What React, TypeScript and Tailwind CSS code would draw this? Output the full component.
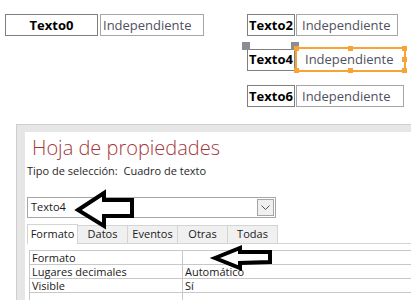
import React from 'react'

const font = { fontFamily: '"Open Sans", "Noto Sans", sans-serif' }

function Label({ text, w = 'w-[48px]' }: { text: string; w?: string }) {
  return (
    <div className={`flex h-[22px] ${w} items-center justify-center border border-[#7f7f7f] bg-white text-[13px] font-bold leading-none text-black`}>
      {text}
    </div>
  )
}

function Field({ w, pad = 'pl-[5px]' }: { w: string; pad?: string }) {
  return (
    <div className={`flex h-[22px] ${w} items-center border border-[#a6a6a6] bg-white text-[13px] leading-none text-[#4f5060] ${pad}`}>
      Independiente
    </div>
  )
}

function Handle({ className }: { className: string }) {
  return <div className={`absolute h-[5px] w-[5px] bg-[#f7a335] ${className}`} />
}

const tabs = ['Formato', 'Datos', 'Eventos', 'Otras', 'Todas']

const rows: { name: string; value: string }[] = [
  { name: 'Formato', value: '' },
  { name: 'Lugares decimales', value: 'Automático' },
  { name: 'Visible', value: 'Sí' },
  { name: '', value: '' },
]

export default function App() {
  return (
    <div className="relative h-[300px] w-[411px] overflow-hidden bg-white" style={font}>
      {/* form design canvas: controls sit where the designer put them */}
      <div className="relative h-[124px]">
        <div className="absolute left-[5px] top-[14px] flex gap-[2px]">
          <Label text="Texto0" w="w-[93px]" />
          <Field w="w-[104px]" pad="pl-[2px]" />
        </div>

        <div className="absolute left-[247px] top-[14px] flex flex-col gap-[11px]">
          <div className="flex gap-[1px]">
            <Label text="Texto2" />
            <Field w="w-[102px]" />
          </div>

          <div className="relative flex items-center">
            <Label text="Texto4" />
            <div className="absolute left-[-5px] top-[-5px] h-[8px] w-[8px] bg-[#8c8c94]" />
            <div className="absolute left-[44px] top-[-5px] h-[8px] w-[8px] bg-[#8c8c94]" />
            <div className="relative flex h-[25px] w-[111px] items-center border-2 border-[#f7a335] bg-white pl-[8px] text-[13px] leading-none text-[#4f5060]">
              Independiente
              <Handle className="left-[-3px] top-[-3px]" />
              <Handle className="left-[51px] top-[-3px]" />
              <Handle className="right-[-3px] top-[-3px]" />
              <Handle className="right-[-3px] top-[8px]" />
              <Handle className="bottom-[-3px] right-[-3px]" />
              <Handle className="bottom-[-3px] left-[51px]" />
              <Handle className="bottom-[-3px] left-[-3px]" />
            </div>
          </div>

          <div className="mt-[2px] flex gap-[1px]">
            <Label text="Texto6" />
            <Field w="w-[108px]" />
          </div>
        </div>
      </div>

      {/* property sheet */}
      <div className="ml-[16px] h-[176px] border-l border-t border-[#cfcfcf] bg-[#e6e6e6] pl-[8px] pt-[7px]">
        <div className="h-full bg-white pl-[2px]">
          <div className="pl-[5px] pt-[3px] text-[20px] font-light leading-[26px] text-[#a4373a]">Hoja de propiedades</div>
          <div className="mt-[3px] text-[11px] leading-[14px] text-[#262626]">Tipo de selección:&nbsp; Cuadro de texto</div>

          <div className="mt-[19px] flex h-[21px] w-[249px] items-center justify-between border border-[#a6a6a6] pl-[3px] text-[11px] text-[#1a1a1a]">
            <span>Texto4</span>
            <div className="mr-[1px] flex h-[17px] w-[17px] items-center justify-center border border-[#a6a6a6] bg-[#f0f0f0]">
              <svg width="9" height="5" viewBox="0 0 9 5">
                <path d="M0.5 0.5 L4.5 4.5 L8.5 0.5" fill="none" stroke="#555" strokeWidth="1" />
              </svg>
            </div>
          </div>

          <div className="mt-[6px] flex h-[20px] items-end border-b border-[#d4d4d4]">
            {tabs.map((t, i) => (
              <div
                key={t}
                className={
                  i === 0
                    ? 'mb-[-1px] flex h-[20px] w-[51px] items-center justify-center border border-b-0 border-[#d4d4d4] bg-white text-[11px] text-[#1a1a1a]'
                    : 'flex h-[18px] w-[50px] items-center justify-center border-r border-t border-[#d4d4d4] bg-[#f0f0f0] text-[11px] text-[#1a1a1a]'
                }
              >
                {t}
              </div>
            ))}
            <div className="flex-1" />
          </div>

          <div className="ml-[2px] mt-[6px] border-l border-t border-[#c8c8c8]">
            {rows.map((r, i) => (
              <div key={i} className="flex h-[14px] border-b border-[#c8c8c8] text-[11px] leading-[13px] text-[#1a1a1a]">
                <div className="w-[153px] border-r border-[#c8c8c8] pl-[2px]">{r.name}</div>
                <div className="flex-1 pl-[2px]">{r.value}</div>
              </div>
            ))}
          </div>
        </div>
      </div>

      {/* annotation arrows drawn over the screenshot */}
      <svg className="absolute left-0 top-0" width="411" height="300" viewBox="0 0 411 300">
        <polygon
          points="78,210 104,193 104,200 132,200 132,216 104,216 104,226"
          fill="white"
          stroke="black"
          strokeWidth="4"
          strokeLinejoin="miter"
        />
        <polygon
          points="215,258 240,248 240,252 270,252 270,262 240,263 240,268"
          fill="white"
          stroke="black"
          strokeWidth="4"
          strokeLinejoin="miter"
        />
      </svg>
    </div>
  )
}
